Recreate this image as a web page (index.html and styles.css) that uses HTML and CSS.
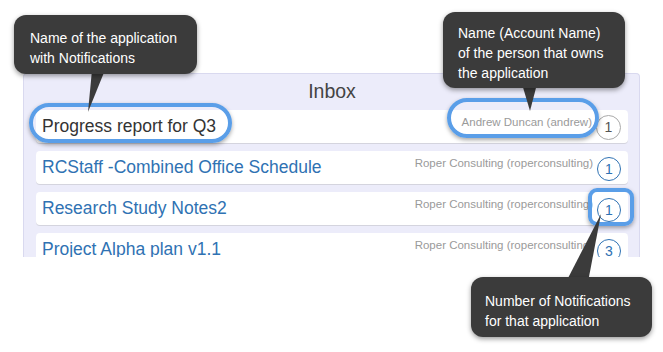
FILE: index.html
```html
<!DOCTYPE html>
<html lang="en">
<head>
  <meta charset="UTF-8" />
  <title>Inbox notifications</title>
  <link rel="stylesheet" href="styles.css">
</head>
<body>
  <div class="panel">
    <h2 class="panel-title">Inbox</h2>
    <div class="row read">
      <span class="app-name">Progress report for Q3</span>
      <span class="owner">Andrew Duncan (andrew)</span>
      <span class="count">1</span>
    </div>
    <div class="row">
      <span class="app-name">RCStaff -Combined Office Schedule</span>
      <span class="owner">Roper Consulting (roperconsulting)</span>
      <span class="count">1</span>
    </div>
    <div class="row">
      <span class="app-name">Research Study Notes2</span>
      <span class="owner">Roper Consulting (roperconsulting)</span>
      <span class="count">1</span>
    </div>
    <div class="row">
      <span class="app-name">Project Alpha plan v1.1</span>
      <span class="owner">Roper Consulting (roperconsulting)</span>
      <span class="count">3</span>
    </div>
  </div>

  <!-- callout highlights -->
  <div class="mark mark-name"></div>
  <div class="mark mark-owner"></div>
  <div class="mark mark-count"></div>

  <svg class="pointers" width="663" height="352" viewBox="0 0 663 352">
    <polygon points="92,70 105,70 88,112" />
    <polygon points="522,84 537,84 530,111" />
    <polygon points="566,282 588,282 601,214" />
  </svg>

  <div class="callout callout-name">Name of the application<br>with Notifications</div>
  <div class="callout callout-owner">Name (Account Name)<br>of the person that owns<br>the application</div>
  <div class="callout callout-count">Number of Notifications<br>for that application</div>
</body>
</html>
```

FILE: styles.css
```css
body {
  font-family: "Liberation Sans", Arial, sans-serif;
  background-color: #fff;
  margin: 0;
  padding: 0;
  width: 663px;
  height: 352px;
  position: relative;
  overflow: hidden;
}

.panel {
  margin: 73px 0 0 23px;
  width: 617px;
  height: 184px;
  box-sizing: border-box;
  padding: 0 11px 0 12px;
  background-color: #ececfa;
  border: 1px solid #d9d9ef;
  border-bottom: none;
  border-radius: 4px 4px 0 0;
  overflow: hidden;
}

.panel-title {
  margin: 0;
  height: 36px;
  line-height: 35px;
  text-align: center;
  font-size: 19.5px;
  font-weight: normal;
  color: #444;
}

.row {
  display: flex;
  align-items: center;
  height: 33px;
  margin-bottom: 8px;
  padding-left: 6px;
  background: #fff;
  border-radius: 4px;
  box-shadow: 0 1px 0 #d4d4de;
}

.app-name {
  font-size: 17.5px;
  color: #2f72b3;
  white-space: nowrap;
}

.row.read .app-name {
  color: #333;
}

.owner {
  margin-left: auto;
  align-self: flex-start;
  margin-top: 6px;
  font-size: 11.5px;
  color: #9a9a9a;
  white-space: nowrap;
}

.count {
  width: 22px;
  height: 22px;
  margin: 2px 7px 0 4px;
  border: 1.5px solid #2f72b3;
  border-radius: 50%;
  text-align: center;
  line-height: 22px;
  font-size: 14px;
  color: #2f72b3;
  flex-shrink: 0;
}

.row.read .count {
  border: 1px solid #aaa;
  width: 23px;
  height: 23px;
  line-height: 23px;
  color: #555;
}

.mark {
  position: absolute;
  border: 4px solid #5a9ee8;
  box-shadow: 0 2px 4px rgba(0, 0, 0, 0.35);
  box-sizing: border-box;
}

.mark-name {
  left: 29px;
  top: 103px;
  width: 203px;
  height: 40px;
  border-radius: 20px;
}

.mark-owner {
  left: 447px;
  top: 98px;
  width: 152px;
  height: 40px;
  border-radius: 20px;
}

.mark-count {
  left: 588px;
  top: 188px;
  width: 46px;
  height: 38px;
  border-radius: 9px;
}

.pointers {
  position: absolute;
  left: 0;
  top: 0;
}

.pointers polygon {
  fill: #3b3b3b;
}

.callout {
  position: absolute;
  box-sizing: border-box;
  background: #3b3b3b;
  color: #fff;
  font-size: 14px;
  line-height: 20px;
  border-radius: 12px;
  box-shadow: 0 2px 5px rgba(0, 0, 0, 0.4);
}

.callout-name {
  left: 14px;
  top: 15px;
  width: 183px;
  height: 59px;
  padding: 13px 0 0 16px;
}

.callout-owner {
  left: 443px;
  top: 12px;
  width: 182px;
  height: 76px;
  padding: 11px 0 0 15px;
}

.callout-count {
  left: 471px;
  top: 277px;
  width: 181px;
  height: 60px;
  padding: 14px 0 0 14px;
}
```
